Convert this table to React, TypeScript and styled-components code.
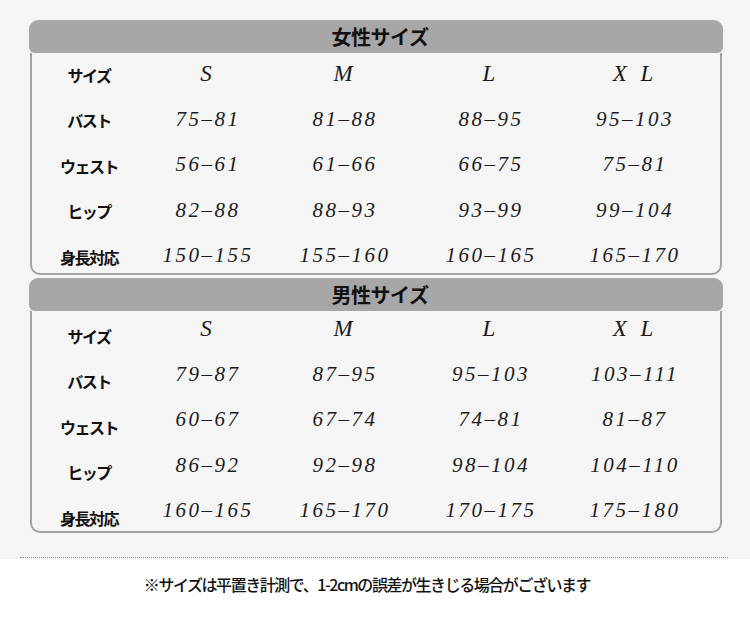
import React from 'react';
import styled, { createGlobalStyle } from 'styled-components';

const GlobalStyle = createGlobalStyle`
  html, body {
    margin: 0;
    padding: 0;
    background: #ffffff;
  }
`;

type Row = { label: string; values: string[] };

const sizeRow: Row = { label: 'サイズ', values: ['S', 'M', 'L', 'X L'] };

const women: Row[] = [
  sizeRow,
  { label: 'バスト', values: ['75–81', '81–88', '88–95', '95–103'] },
  { label: 'ウェスト', values: ['56–61', '61–66', '66–75', '75–81'] },
  { label: 'ヒップ', values: ['82–88', '88–93', '93–99', '99–104'] },
  { label: '身長対応', values: ['150–155', '155–160', '160–165', '165–170'] },
];

const men: Row[] = [
  sizeRow,
  { label: 'バスト', values: ['79–87', '87–95', '95–103', '103–111'] },
  { label: 'ウェスト', values: ['60–67', '67–74', '74–81', '81–87'] },
  { label: 'ヒップ', values: ['86–92', '92–98', '98–104', '104–110'] },
  { label: '身長対応', values: ['160–165', '165–170', '170–175', '175–180'] },
];

function SizeCard({
  title,
  rows,
  labelShift = 0,
  valueShift = 0,
}: {
  title: string;
  rows: Row[];
  labelShift?: number;
  valueShift?: number;
}) {
  return (
    <Card>
      <CardHeader>{title}</CardHeader>
      <CardBody>
        {rows.map((row, i) => (
          <React.Fragment key={row.label}>
            <Label $shift={labelShift}>{row.label}</Label>
            {row.values.map((v, j) => (
              <Value key={j} $shift={valueShift} $size={i === 0}>
                {v}
              </Value>
            ))}
          </React.Fragment>
        ))}
      </CardBody>
    </Card>
  );
}

export default function App() {
  return (
    <>
      <GlobalStyle />
      <Sheet>
        <SizeCard title="女性サイズ" rows={women} labelShift={-1} valueShift={-2} />
        <SizeCard title="男性サイズ" rows={men} labelShift={2} valueShift={-5} />
        <Divider />
      </Sheet>
      <Note>※サイズは平置き計測で、1-2cmの誤差が生きじる場合がございます</Note>
    </>
  );
}

// Styled-components

const Sheet = styled.div`
  background: #f5f5f5;
  padding-top: 20px;
  display: flex;
  flex-direction: column;
  gap: 3px;
  height: 539px;
`;

const Card = styled.section`
  margin-left: 29px;
  width: 694px;
  display: flex;
  flex-direction: column;
`;

const CardHeader = styled.h2`
  margin: 0;
  height: 33px;
  background: #a7a7a7;
  border-radius: 9px 9px 6px 6px;
  display: flex;
  align-items: center;
  justify-content: center;
  padding-left: 8px;
  font-family: 'Noto Sans CJK JP', sans-serif;
  font-weight: 700;
  font-size: 20px;
  letter-spacing: -0.5px;
  color: #111;
`;

const CardBody = styled.div`
  margin: 0 1px;
  height: 220px;
  border: 2px solid #a3a3a3;
  border-top: none;
  border-radius: 0 0 10px 10px;
  display: grid;
  grid-template-columns: 114px 124px 150px 142px 146px;
  grid-auto-rows: 45.5px;
  align-content: start;
  align-items: center;
`;

const Label = styled.div<{ $shift: number }>`
  text-align: center;
  font-family: 'Noto Sans CJK JP', sans-serif;
  font-weight: 700;
  font-size: 16px;
  letter-spacing: -1.5px;
  color: #111;
  transform: translateY(${(p) => p.$shift}px);
`;

const Value = styled.div<{ $shift: number; $size: boolean }>`
  text-align: center;
  font-family: 'Liberation Serif', serif;
  font-style: italic;
  font-size: ${(p) => (p.$size ? '23px' : '21px')};
  letter-spacing: ${(p) => (p.$size ? '4px' : '2.5px')};
  color: #1a1a1a;
  transform: translateY(${(p) => p.$shift}px);
`;

const Divider = styled.div`
  margin: 21px 22px 0 20px;
  border-top: 1px dotted #8a8a8a;
`;

const Note = styled.p`
  margin: 0;
  padding-top: 15px;
  text-align: center;
  padding-right: 16px;
  font-family: 'Noto Sans CJK JP', sans-serif;
  font-weight: 500;
  font-size: 16px;
  line-height: 20px;
  letter-spacing: -1.45px;
  color: #111;
`;
